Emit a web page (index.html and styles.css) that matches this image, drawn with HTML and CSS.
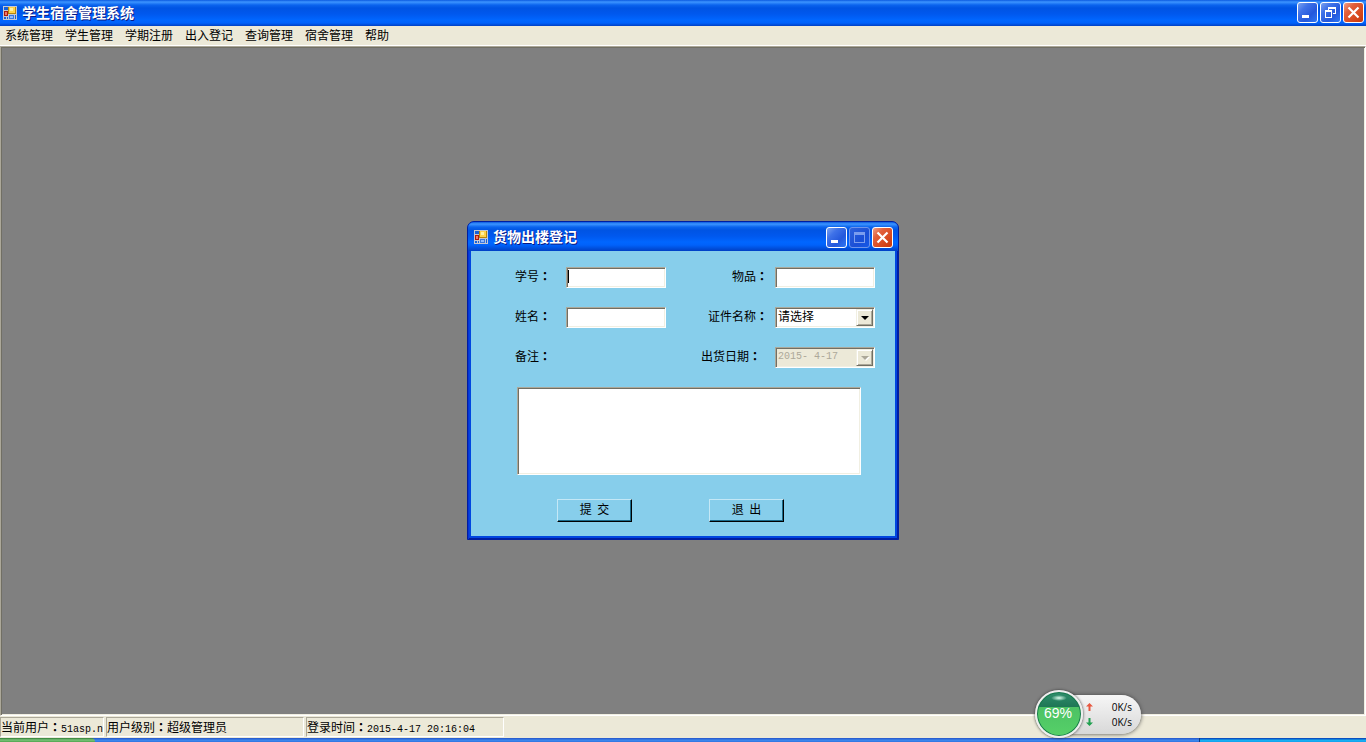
FILE: index.html
```
<!DOCTYPE html>
<html lang="zh-CN">
<head>
<meta charset="utf-8">
<title>学生宿舍管理系统</title>
<link rel="stylesheet" href="styles.css">
</head>
<body>
<svg class="defs" aria-hidden="true">
  <symbol id="app-icon" viewBox="0 0 14 14">
    <rect width="14" height="14" fill="#c4c8d4"/>
    <path d="M1 1h4v3H1zM1 11h2v2H1zM4 11h1v2H4zM12 9h1v4h-1z" fill="#1660d8"/>
    <rect x="5" y="1" width="8" height="7" fill="#b8860b"/>
    <rect x="6" y="1" width="6" height="6" fill="#ffd24a"/>
    <rect x="7" y="2" width="3" height="3" fill="#fff0a0"/>
    <rect x="1" y="5" width="4" height="5" fill="#a81a10"/>
    <rect x="2" y="6" width="2" height="3" fill="#f07868"/>
    <rect x="6" y="9" width="5" height="4" fill="#3a78e0"/>
    <rect x="7" y="10" width="3" height="2" fill="#90baff"/>
  </symbol>
  <symbol id="icon-min" viewBox="0 0 21 21"><path d="M5 13h7v3H5z" fill="#fff"/></symbol>
  <symbol id="icon-max" viewBox="0 0 21 21"><path d="M5 5h11v11H5zM6 8v7h9V8z" fill="currentColor" fill-rule="evenodd"/></symbol>
  <symbol id="icon-restore" viewBox="0 0 21 21"><path d="M8 5h8v7h-3v-1h2V7H9v1H8zM5 8h7v8H5zM6 10v5h5v-5z" fill="#fff" fill-rule="evenodd"/></symbol>
  <symbol id="icon-close" viewBox="0 0 21 21"><path d="M5.500 5.500l10 10M15.500 5.500l-10 10" stroke="#fff" stroke-width="2.200"/></symbol>
</svg>

<header class="titlebar">
  <svg class="app-icon"><use href="#app-icon"/></svg>
  <h1 class="title">学生宿舍管理系统</h1>
  <div class="controls">
    <button class="control" type="button" aria-label="最小化"><svg><use href="#icon-min"/></svg></button>
    <button class="control" type="button" aria-label="还原"><svg><use href="#icon-restore"/></svg></button>
    <button class="control control-close" type="button" aria-label="关闭"><svg><use href="#icon-close"/></svg></button>
  </div>
</header>

<nav class="menubar">
  <button type="button">系统管理</button>
  <button type="button">学生管理</button>
  <button type="button">学期注册</button>
  <button type="button">出入登记</button>
  <button type="button">查询管理</button>
  <button type="button">宿舍管理</button>
  <button type="button">帮助</button>
</nav>

<main class="workspace">
  <section class="dialog">
    <header class="titlebar dialog-bar">
      <svg class="app-icon"><use href="#app-icon"/></svg>
      <h2 class="title">货物出楼登记</h2>
      <div class="controls">
        <button class="control" type="button" aria-label="最小化"><svg><use href="#icon-min"/></svg></button>
        <button class="control" type="button" aria-label="最大化" disabled><svg><use href="#icon-max"/></svg></button>
        <button class="control control-close" type="button" aria-label="关闭"><svg><use href="#icon-close"/></svg></button>
      </div>
    </header>
    <form class="form">
      <div class="fields">
        <label for="sid">学号<span class="colon" lang="zh-TW">：</span></label>
        <input class="sunken caret" id="sid" type="text">
        <label class="end" for="item">物品<span class="colon" lang="zh-TW">：</span></label>
        <input class="sunken" id="item" type="text">

        <label for="name">姓名<span class="colon" lang="zh-TW">：</span></label>
        <input class="sunken" id="name" type="text">
        <label class="end" for="cert">证件名称<span class="colon" lang="zh-TW">：</span></label>
        <div class="sunken combo">
          <select id="cert"><option>请选择</option></select>
          <span class="arrow"></span>
        </div>

        <label class="note-label" for="note">备注<span class="colon" lang="zh-TW">：</span></label>
        <label class="end date-label" for="date">出货日期<span class="colon" lang="zh-TW">：</span></label>
        <div class="sunken combo combo-off">
          <input id="date" type="text" value="2015- 4-17" disabled>
          <button class="arrow" type="button" aria-label="选择日期" disabled></button>
        </div>
      </div>
      <textarea class="sunken note" id="note"></textarea>
      <div class="actions">
        <button class="action" type="submit">提&nbsp; 交</button>
        <button class="action" type="button">退&nbsp; 出</button>
      </div>
    </form>
  </section>
</main>

<footer class="statusbar">
  <div class="panel panel-user">当前用户<span class="colon" lang="zh-TW">：</span><span class="mono">51asp.n</span></div>
  <div class="panel panel-wide">用户级别<span class="colon" lang="zh-TW">：</span>超级管理员</div>
  <div class="panel panel-wide">登录时间<span class="colon" lang="zh-TW">：</span><span class="mono">2015-4-17 20:16:04</span></div>
</footer>

<div class="taskbar"><div class="start"></div><div class="tray"></div></div>

<aside class="monitor">
  <div class="ball">69%</div>
  <div class="rates">
    <div class="rate"><svg class="up" viewBox="0 0 7 8"><path d="M3.500 0L7 3.500H4.500V8h-2V3.500H0z"/></svg>0K/s</div>
    <div class="rate"><svg class="down" viewBox="0 0 7 8"><path d="M3.500 8L7 4.500H4.500V0h-2v4.500H0z"/></svg>0K/s</div>
  </div>
</aside>
</body>
</html>
```
FILE: styles.css
```
* { box-sizing: border-box; }

body {
  margin: 0;
  height: 100vh;
  display: flex;
  flex-direction: column;
  position: relative;
  overflow: hidden;
  background: #ece9d8;
  color: #000;
  font: 12px/14px "Noto Sans CJK SC", sans-serif;
}

button, input, select, textarea {
  margin: 0;
  padding: 0;
  border: 0;
  border-radius: 0;
  background: none;
  color: inherit;
  font: inherit;
  outline: 0;
}

.defs { position: absolute; width: 0; height: 0; }
.colon { font-family: "Noto Sans CJK TC", sans-serif; font-weight: bold; }
.mono { font: 10px/14px "Liberation Mono", monospace; }

/* Title bars */
.titlebar {
  flex: none;
  display: flex;
  align-items: center;
  height: 26px;
  padding: 0 2px 1px 3px;
  background: linear-gradient(#0b5ae0 0, #3d95ff 2px, #0b64ee 5px, #0054e3 8px, #0058ee 14px, #0066ff 20px, #0062fb 23px, #0040c4 100%);
}
.app-icon { width: 14px; height: 14px; margin-right: 5px; }
.title {
  flex: 1;
  margin: 0;
  padding-bottom: 2px;
  color: #fff;
  font-size: 14px;
  line-height: 20px;
  font-weight: bold;
  text-shadow: 1px 1px 0 #0a1883;
}
.controls { display: flex; gap: 2px; }
.control {
  width: 21px;
  height: 21px;
  border: 1px solid #fff;
  border-radius: 3px;
  background: linear-gradient(135deg, #7ba2f0 0, #3f72e8 30%, #2458dc 65%, #2e78f4 100%);
  color: #fff;
}
.control svg { display: block; width: 21px; height: 21px; margin: -1px; }
.control:disabled {
  border-color: #6f94ea;
  background: linear-gradient(135deg, #2f62dc, #1a4fd6 60%, #1558e8);
  color: #7b9dee;
}
.control-close { background: linear-gradient(135deg, #f0a088 0, #e2603c 30%, #d84a20 65%, #c8380c 100%); }

/* Menu */
.menubar {
  flex: none;
  display: flex;
  gap: 12px;
  height: 20px;
  padding: 0 5px;
  border-bottom: 1px solid #fff;
}
.menubar button { padding-bottom: 2px; line-height: 16px; }

/* Workspace */
.workspace {
  flex: 1;
  display: flex;
  align-items: center;
  justify-content: center;
  padding-bottom: 2px;
  border: 1px solid;
  border-color: #aca899 #fff #fff #aca899;
  background: #808080;
  box-shadow: inset 1px 1px #716f64, inset -1px -1px #f1efe2;
}

/* Dialog */
.dialog {
  width: 432px;
  border: 1px solid #001ea0;
  border-radius: 7px 7px 0 0;
  background: #0046e0;
  box-shadow: inset 1px 0 #0831d9, inset -1px -1px #001ea0;
}
.dialog-bar {
  height: 29px;
  padding: 2px 5px 0 6px;
  border-radius: 6px 6px 0 0;
}
.form {
  margin: 0 3px 3px;
  padding: 16px 20px 14px 44px;
  background: #87ceeb;
}
.fields {
  display: grid;
  grid-template-columns: 51px 100px 1fr 100px;
  grid-auto-rows: 21px;
  row-gap: 19px;
}
.fields label { line-height: 18px; }
.end { text-align: right; padding-right: 7px; }
.note-label { grid-column: 1 / 3; }
.date-label { padding-right: 14px; }
.sunken {
  border: 1px solid;
  border-color: #aca899 #fff #fff #aca899;
  background: #fff;
  box-shadow: inset 1px 1px #716f64, inset -1px -1px #f1efe2;
}
.fields .sunken { width: 100px; padding: 2px; }
.fields .caret { background: linear-gradient(#000, #000) 1px 2px / 1px 13px no-repeat #fff; }
.fields .combo {
  display: flex;
  position: relative;
  padding: 1px;
}
.combo select, .combo input {
  flex: 1;
  min-width: 0;
  width: 100%;
  padding: 0 0 3px 1px;
  appearance: none;
  line-height: 14px;
}
.arrow {
  position: absolute;
  top: 1px;
  right: 1px;
  bottom: 1px;
  width: 17px;
  background: #ece9d8;
  border: 1px solid;
  border-color: #f1efe2 #716f64 #716f64 #f1efe2;
  box-shadow: inset 1px 1px #fff, inset -1px -1px #aca899;
  pointer-events: none;
}
.arrow::after {
  content: "";
  position: absolute;
  left: 4px;
  top: 6px;
  border: 4px solid transparent;
  border-top-color: #000;
  border-bottom: 0;
}
.combo-off { background: #ece9d8; color: #aca899; }
.fields .combo-off { background: #ece9d8; }
.combo-off input { padding-bottom: 0; font: 10px/14px "Liberation Mono", monospace; }
.combo-off .arrow::after { border-top-color: #aca899; filter: drop-shadow(1px 1px 0 #fff); }
.note {
  display: block;
  width: 344px;
  max-width: 100%;
  height: 88px;
  margin: 19px 0 24px 2px;
  padding: 3px;
  resize: none;
}
.actions { display: flex; gap: 77px; padding-left: 42px; }
.action {
  width: 75px;
  height: 23px;
  padding-bottom: 3px;
  border: 1px solid;
  border-color: #c4e8f6 #000 #000 #c4e8f6;
  box-shadow: inset -1px -1px #1a6a8a;
}

/* Status bar */
.statusbar {
  flex: none;
  display: flex;
  gap: 2px;
  height: 22px;
  padding: 1px 0 0;
}
.panel {
  height: 20px;
  border: 1px solid;
  border-color: #aca899 #fff #fff #aca899;
  line-height: 18px;
  white-space: nowrap;
  overflow: hidden;
}
.panel-user { width: 104px; }
.panel-wide { width: 198px; }

/* Taskbar sliver */
.taskbar {
  flex: none;
  display: flex;
  justify-content: space-between;
  height: 4px;
  background: linear-gradient(#2a5fd0 0, #2a5fd0 1px, #3f8cf0 2px, #2f74e0 100%);
}
.start { width: 95px; border-radius: 0 4px 0 0; background: linear-gradient(#2f7a34, #7cc47a 2px, #4ea44e); }
.tray { width: 167px; border-left: 1px solid #0b3a80; background: linear-gradient(#0a50c0 0, #0a50c0 1px, #19b4f4 2px, #12a0ec 100%); }

/* Floating speed monitor */
.monitor {
  position: absolute;
  right: 225px;
  bottom: 4px;
  display: flex;
  align-items: center;
  height: 48px;
}
.ball {
  z-index: 1;
  width: 48px;
  height: 48px;
  padding-right: 2px;
  border: 2px solid #eee;
  border-radius: 50%;
  background: linear-gradient(#2f8f6c 0, #1f7656 33%, #4cc264 34%, #56d068 100%);
  box-shadow: inset 0 0 0 1px #17784c, 0 0 3px #333;
  color: #fff;
  font: 14px/43px "Liberation Sans", sans-serif;
  text-align: center;
  position: relative;
}
.ball::before {
  content: "";
  position: absolute;
  left: 14px;
  top: 3px;
  width: 16px;
  height: 6px;
  border-radius: 50%;
  background: radial-gradient(#e0fff0, transparent 70%);
}
.rates {
  width: 82px;
  height: 39px;
  margin-left: -24px;
  padding: 5px 9px 4px 27px;
  border-radius: 0 20px 20px 0;
  background: linear-gradient(#f6f6f6, #d8d8d8);
  box-shadow: 0 0 4px #444;
}
.rate {
  display: flex;
  align-items: center;
  justify-content: space-between;
  font: 10px/15px "Open Sans", sans-serif;
}
.rate svg { width: 7px; height: 8px; }
.up { fill: #e85840; }
.down { fill: #20a050; }
```
